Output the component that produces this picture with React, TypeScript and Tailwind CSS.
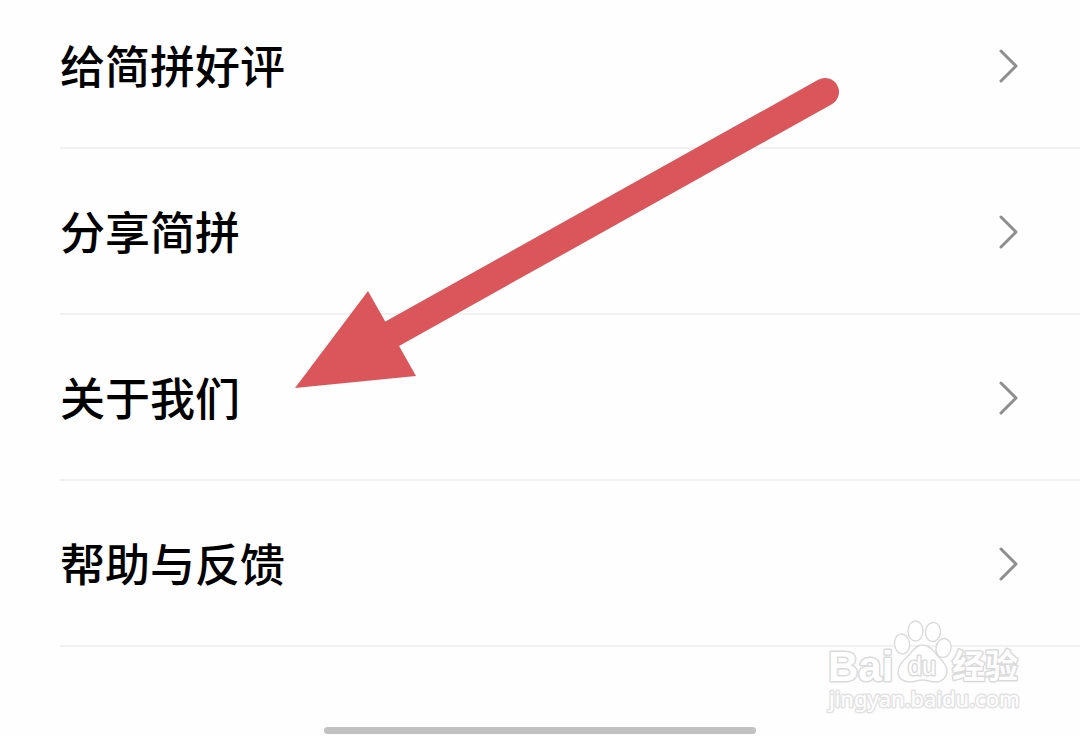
import React from 'react';

interface MenuRowProps {
  label: string;
  href: string;
}

const items: MenuRowProps[] = [
  { label: '给简拼好评', href: '#rate' },
  { label: '分享简拼', href: '#share' },
  { label: '关于我们', href: '#about' },
  { label: '帮助与反馈', href: '#feedback' },
];

const Chevron: React.FC = () => (
  <svg width="20" height="36" viewBox="0 0 20 36" fill="none" className="shrink-0" aria-hidden="true">
    <path d="M2 3L17 18L2 33" stroke="#8e8e8e" strokeWidth="3" strokeLinecap="round" strokeLinejoin="round" />
  </svg>
);

const MenuRow: React.FC<MenuRowProps> = ({ label, href }) => (
  <li className="ml-[60px] border-b-2 border-[#f1f1f1] first:-mt-[17px]">
    <a href={href} className="flex h-[164px] items-center justify-between pr-[61px] pt-0.5 text-[45px] font-medium leading-[64px] text-black">
      <span className="pb-0.5">{label}</span>
      <Chevron />
    </a>
  </li>
);

// Seta que aponta para "关于我们"
const Arrow: React.FC = () => (
  <svg width="546" height="312" viewBox="0 0 546 312" className="pointer-events-none absolute left-[294px] top-[77px]" aria-hidden="true">
    <path d="M531 15L96 258" stroke="#db565b" strokeWidth="28" strokeLinecap="round" />
    <path d="M1 311L74 214L122 299Z" fill="#db565b" />
  </svg>
);

const Watermark: React.FC = () => (
  <svg
    width="204"
    height="100"
    viewBox="0 0 204 100"
    className="pointer-events-none absolute left-[824px] top-[616px]"
    role="img"
    aria-label="Baidu 经验"
    fill="#ffffff"
    stroke="#dadada"
    strokeWidth="2"
    strokeLinejoin="round"
    paintOrder="stroke"
  >
    <g strokeWidth="3">
      <text x="4" y="65" className="font-['Liberation_Sans',sans-serif] text-[42px] font-bold">Bai</text>
      <text x="128" y="62" className="font-['Noto_Sans_CJK_SC',sans-serif] text-[33px] font-bold">经验</text>
      <text x="5" y="91" stroke="#e2e2e2" className="font-['Noto_Sans',sans-serif] text-[22px] font-normal">jingyan.baidu.com</text>
    </g>
    <g strokeWidth="1.4" paintOrder="normal">
      <ellipse cx="78" cy="28" rx="7.5" ry="10" transform="rotate(-8 78 28)" />
      <ellipse cx="91.5" cy="15" rx="7.5" ry="10" />
      <ellipse cx="109" cy="16" rx="7.5" ry="9.5" transform="rotate(8 109 16)" />
      <ellipse cx="119.5" cy="32" rx="7.5" ry="9.5" transform="rotate(12 119.5 32)" />
      <path d="M98 29C92 29 89 35 84 40C79 45 74 49 74 57C74 62 79 66 86 66C91 66 94 64 98 64C103 64 107 66 112 66C118 66 123 61 123 55C123 48 117 44 113 39C109 34 105 29 98 29Z" />
    </g>
    <text x="84" y="59" strokeWidth="3" className="font-['Liberation_Sans',sans-serif] text-[25px] font-normal">du</text>
  </svg>
);

export default function App() {
  return (
    <main className="relative overflow-hidden bg-[#fefefe] font-['Noto_Sans_CJK_SC',sans-serif]">
      <ul>
        {items.map((item) => (
          <MenuRow key={item.label} label={item.label} href={item.href} />
        ))}
      </ul>
      <div className="flex justify-center pb-0.5 pt-20">
        <div className="h-[7px] w-2/5 rounded-full bg-[#c1c1c1]" />
      </div>
      <Arrow />
      <Watermark />
    </main>
  );
}
